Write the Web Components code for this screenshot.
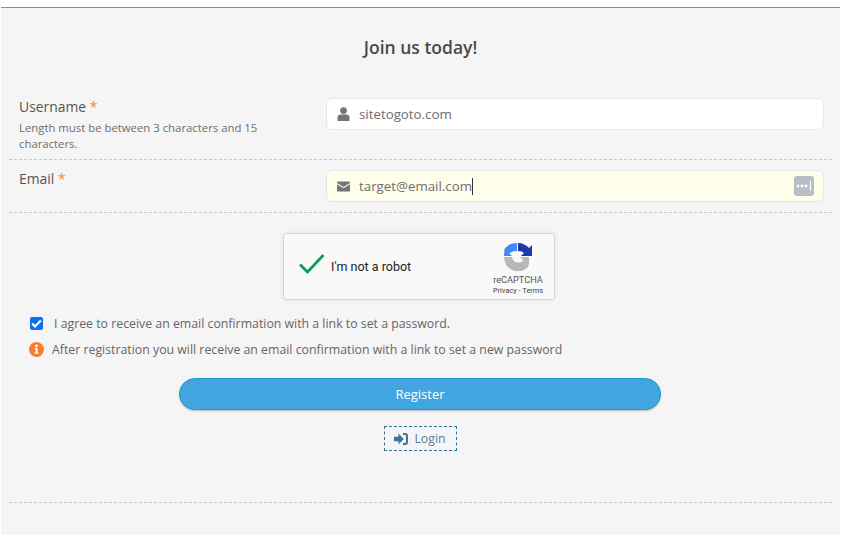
<!DOCTYPE html>
<html>
<head>
<meta charset="utf-8">
<title>Join us today</title>
<style>
    html, body { margin: 0; background: #fff; }
    body { font-family: "Open Sans", "Noto Sans", "Liberation Sans", sans-serif; height: 535px; overflow: hidden; }
</style>
</head>
<body>
<registro-panel>
    <campo-form etiqueta="Username" ayuda="Length must be between 3 characters and 15 characters." alto="70" icono="user" valor="sitetogoto.com"></campo-form>
    <campo-form etiqueta="Email" alto="53" icono="mail" valor="target@email.com" relleno></campo-form>
    <caja-captcha></caja-captcha>
    <fila-aviso></fila-aviso>
    <boton-registro></boton-registro>
</registro-panel>
<script>
class RegistroPanel extends HTMLElement {
    constructor() {
        super();
        this.attachShadow({ mode: 'open' });
    }
    connectedCallback() {
        this.shadowRoot.innerHTML = `
            <style>
                :host {
                    display: block;
                    margin: 7px 8px 0 1px;
                    height: 528px;
                    background: #f5f5f5;
                    border-top: 1px solid #4b9fd1;
                    padding: 0 8px;
                    box-sizing: border-box;
                    color: #555;
                }
                h1 {
                    margin: 0;
                    height: 82px;
                    padding-top: 27px;
                    box-sizing: border-box;
                    font-size: 17.5px;
                    line-height: 24px;
                    font-weight: 600;
                    text-align: center;
                    color: #4a4a4a;
                }
                .pie {
                    margin-top: 51px;
                    border-bottom: 1px dashed #c8c8c8;
                }
            </style>
            <h1>Join us today!</h1>
            <slot></slot>
            <div class="pie"></div>
        `;
    }
}

const ICONOS = {
    user: '<svg width="13" height="14" viewBox="0 0 13 14"><circle cx="6.5" cy="3.6" r="3.4" fill="#757575"/><path d="M0.5 14V10.6C0.5 8.6 2 7.6 3.6 7.6H9.4C11 7.6 12.5 8.6 12.5 10.6V14Z" fill="#757575"/></svg>',
    mail: '<svg width="14" height="11" viewBox="0 0 14 11"><path d="M1 0H13C13.6 0 14 .4 14 1V1.6L7 6 0 1.6V1C0 .4.4 0 1 0Z" fill="#757575"/><path d="M0 3L7 7.4 14 3V10C14 10.6 13.6 11 13 11H1C.4 11 0 10.6 0 10Z" fill="#757575"/></svg>'
};

class CampoForm extends HTMLElement {
    constructor() {
        super();
        this.attachShadow({ mode: 'open' });
    }
    connectedCallback() {
        const etiqueta = this.getAttribute('etiqueta') || '';
        const ayuda = this.getAttribute('ayuda');
        const valor = this.getAttribute('valor') || '';
        const relleno = this.hasAttribute('relleno');
        this.shadowRoot.innerHTML = `
            <style>
                :host {
                    display: grid;
                    grid-template-columns: 317px 498px;
                    height: ${this.getAttribute('alto')}px;
                    box-sizing: border-box;
                    border-bottom: 1px dashed #c8c8c8;
                    padding-top: ${ayuda ? 8 : 10}px;
                }
                .izq { padding-left: 10px; }
                label { display: block; font-size: 13.9px; line-height: 19px; color: #555; margin-top: -1px; }
                label b { color: #f5853f; font-weight: 400; }
                small { display: block; font-size: 11.35px; line-height: 16px; color: #6e6e6e; width: 262px; margin-top: 4px; }
                .caja {
                    height: 32px;
                    box-sizing: border-box;
                    border: 1px solid #e6e6e6;
                    border-radius: 6px;
                    background: ${relleno ? '#fefeea' : '#fff'};
                    display: flex;
                    align-items: center;
                    padding: 0 9px 0 10px;
                    font-size: 13.3px;
                    color: #6e6e6e;
                }
                .ico { width: 13px; display: flex; margin-right: 9px; }
                .cursor { width: 1px; height: 17px; background: #333; margin-left: 0; }
                .puntos {
                    margin-left: auto;
                    width: 20px;
                    height: 20px;
                    border-radius: 3px;
                    background: #b7bdc9;
                    color: #fff;
                    display: flex;
                    align-items: center;
                    justify-content: center;
                }
            </style>
            <div class="izq">
                <label>${etiqueta} <b>*</b></label>
                ${ayuda ? `<small>${ayuda}</small>` : ''}
            </div>
            <div class="caja">
                <span class="ico">${ICONOS[this.getAttribute('icono')]}</span>
                <span>${valor}</span>
                ${relleno ? `<span class="cursor"></span>
                <span class="puntos"><svg width="16" height="10" viewBox="0 0 16 10"><circle cx="2" cy="5" r="1.4" fill="#fff"/><circle cx="6" cy="5" r="1.4" fill="#fff"/><circle cx="10" cy="5" r="1.4" fill="#fff"/><rect x="14" y="0" width="1" height="10" fill="#fff"/></svg></span>` : ''}
            </div>
        `;
    }
}

class CajaCaptcha extends HTMLElement {
    constructor() {
        super();
        this.attachShadow({ mode: 'open' });
    }
    connectedCallback() {
        this.shadowRoot.innerHTML = `
            <style>
                :host {
                    display: flex;
                    width: 272px;
                    height: 67px;
                    margin: 20px 0 0 274px;
                    box-sizing: border-box;
                    background: #f9f9f9;
                    border: 1px solid #d6d6d6;
                    border-radius: 3px;
                    box-shadow: 0 0 4px rgba(0,0,0,.08);
                    font-family: Roboto, "Liberation Sans", sans-serif;
                    color: #000;
                    align-items: flex-start;
                }
                svg.ok { margin: 19px 0 0 14px; }
                .txt { font-size: 12.5px; line-height: 16px; margin: 25px 0 0 5px; color: #222; white-space: nowrap; }
                .marca { margin-left: auto; width: 62px; margin-right: 5px; text-align: center; margin-top: 9px; color: #555; }
                .marca svg { display: block; margin: 0 auto; }
                .nom { font-size: 9.2px; line-height: 11px; margin-top: 3px; }
                .ley { font-size: 7.4px; line-height: 12px; color: #444; white-space: nowrap; }
            </style>
            <svg class="ok" width="28" height="22" viewBox="0 0 28 22"><path d="M2 11.5L9.5 19 25.5 2" fill="none" stroke="#109a5b" stroke-width="2.8"/></svg>
            <span class="txt">I'm not a robot</span>
            <div class="marca">
                <svg width="28" height="28" viewBox="0 0 28 28">
                    <path d="M0 13H8L5.5 10.5C7 8.8 9.5 8 13 8V0C7 0 3 2.5 .5 6Z" fill="#4189f0"/>
                    <path d="M14 0C18.5 0 22.5 2 25 5L28 2V13H17L20 10C18.5 8.8 17 8 14 8Z" fill="#1c3aa9"/>
                    <path d="M0 14H8C8.5 17.5 10.5 19.5 14 19.5C16 19.5 18 18.8 19.5 17.5L16 14H25V21L24 24A14 14 0 0 1 0 14Z" fill="#b8b8b8"/>
                </svg>
                <div class="nom">reCAPTCHA</div>
                <div class="ley">Privacy - Terms</div>
            </div>
        `;
    }
}

class FilaAviso extends HTMLElement {
    constructor() {
        super();
        this.attachShadow({ mode: 'open' });
    }
    connectedCallback() {
        this.shadowRoot.innerHTML = `
            <style>
                :host {
                    display: flex;
                    flex-direction: column;
                    gap: 7px;
                    padding: 14px 0 0 20px;
                    font-size: 12.32px;
                    color: #666;
                }
                .fila { display: flex; align-items: center; height: 19px; }
                .check {
                    width: 13px;
                    height: 13px;
                    border-radius: 2px;
                    background: #0b6ff2;
                    display: flex;
                    align-items: center;
                    justify-content: center;
                    margin: 0 11px 0 1px;
                }
                .info { margin-right: 8px; display: flex; }
            </style>
            <div class="fila">
                <span class="check"><svg width="11" height="9" viewBox="0 0 11 9"><path d="M1.2 4.6L4 7.4 9.8 1.4" fill="none" stroke="#fff" stroke-width="2.2"/></svg></span>
                <span>I agree to receive an email confirmation with a link to set a password.</span>
            </div>
            <div class="fila">
                <span class="info"><svg width="15" height="15" viewBox="0 0 15 15"><circle cx="7.5" cy="7.5" r="7.5" fill="#f97b2b"/><circle cx="7.5" cy="4" r="1.4" fill="#fff"/><path d="M5.8 6.3H8.6V10.4H9.6V11.7H5.6V10.4H6.6V7.6H5.8Z" fill="#fff"/></svg></span>
                <span>After registration you will receive an email confirmation with a link to set a new password</span>
            </div>
        `;
    }
}

class BotonRegistro extends HTMLElement {
    constructor() {
        super();
        this.attachShadow({ mode: 'open' });
    }
    connectedCallback() {
        this.shadowRoot.innerHTML = `
            <style>
                :host {
                    display: flex;
                    flex-direction: column;
                    align-items: center;
                    padding-top: 19px;
                }
                button {
                    display: block;
                    width: 482px;
                    height: 32px;
                    margin-right: 1px;
                    border: 1px solid #1e9ccb;
                    border-radius: 16px;
                    background: #42a5df;
                    box-shadow: 0 1px 2px rgba(0,0,0,.25);
                    color: #fff;
                    font: 13px "Open Sans", "Noto Sans", sans-serif;
                }
                a {
                    display: flex;
                    align-items: center;
                    justify-content: center;
                    gap: 6px;
                    margin-top: 16px;
                    width: 73px;
                    height: 25px;
                    box-sizing: border-box;
                    padding-right: 1px;
                    border: 1px dashed #2f7397;
                    color: #5a7f98;
                    font-size: 12.3px;
                    text-decoration: none;
                }
            </style>
            <button type="button">Register</button>
            <a href="#"><svg width="14" height="12" viewBox="0 0 14 12"><path d="M0 3.7H4.5V.6L9.8 6 4.5 11.4V8.3H0Z" fill="#3c7498"/><path d="M9 1H11.3C12.6 1 13 1.6 13 3V9C13 10.4 12.6 11 11.3 11H9" fill="none" stroke="#3c7498" stroke-width="2"/></svg><span>Login</span></a>
        `;
    }
}

customElements.define('registro-panel', RegistroPanel);
customElements.define('campo-form', CampoForm);
customElements.define('caja-captcha', CajaCaptcha);
customElements.define('fila-aviso', FilaAviso);
customElements.define('boton-registro', BotonRegistro);
</script>
</body>
</html>
